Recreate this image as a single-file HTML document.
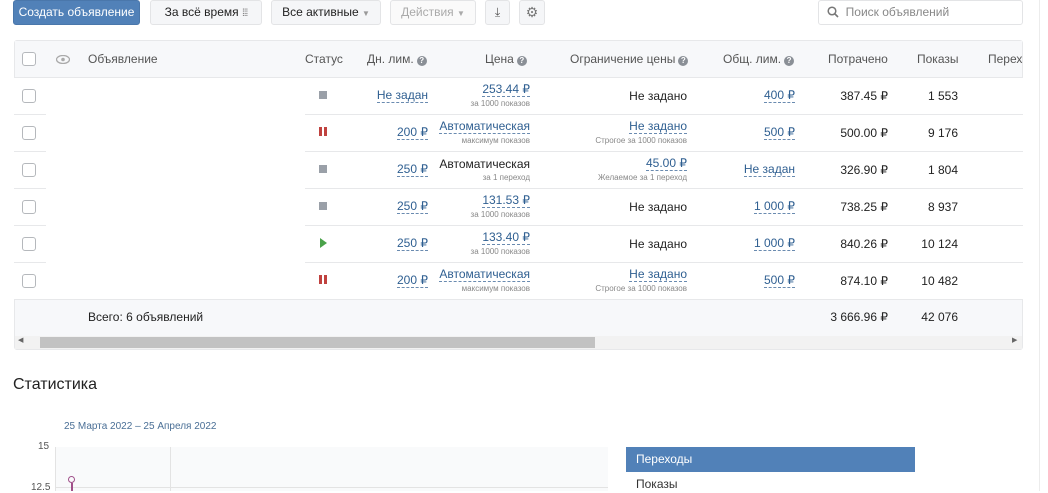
<!DOCTYPE html>
<html><head><meta charset="utf-8"><style>
*{box-sizing:border-box;margin:0;padding:0}
body{width:1048px;height:491px;overflow:hidden;background:#fff;font-family:"Liberation Sans",sans-serif;font-size:12px;color:#222;position:relative}
.a{position:absolute;white-space:nowrap}
.btn{position:absolute;top:0;height:25px;border:1px solid #e3e4e6;border-radius:3px;background:#f5f6f8;line-height:23px;font-size:12px;color:#222;text-align:center}
.r{text-align:right}
.lk{color:#2f5f91;border-bottom:1px dashed #6a8bb0;line-height:13px}
.sub{font-size:8px;color:#888}
.row{position:absolute;left:14px;width:1009px;height:37px;border-top:1px solid #e7e8ea;background:#fff}
.cb{position:absolute;left:8px;top:11px;width:14px;height:14px;border:1px solid #b5b8bc;border-radius:3px;background:#fff}
.hq{display:inline-block;width:10px;height:10px;border-radius:50%;background:#8a8f96;color:#fff;font-size:8px;line-height:10px;text-align:center;font-weight:bold;vertical-align:0px;margin-left:3px}
</style></head><body>
<!-- toolbar -->
<div class="btn" style="left:13px;width:127px;background:#5181b8;border-color:#4a77ab;color:#fff">Создать объявление</div>
<div class="btn" style="left:150px;width:112px">За всё время <span style="color:#777;font-size:10px;letter-spacing:-1px">⁞⁞⁞</span></div>
<div class="btn" style="left:271px;width:110px">Все активные <span style="color:#999;font-size:8px">▼</span></div>
<div class="btn" style="left:390px;width:86px;color:#aaa;background:#fafafa">Действия <span style="font-size:8px">▼</span></div>
<div class="btn" style="left:485px;width:25px;color:#555">⤓</div>
<div class="btn" style="left:519px;width:26px;color:#777;font-size:14px">⚙</div>
<div class="btn" style="left:818px;top:0;width:205px;background:#fff;text-align:left;padding-left:8px;color:#888">
<svg width="12" height="12" viewBox="0 0 12 12" style="vertical-align:-2px"><circle cx="5" cy="5" r="3.8" fill="none" stroke="#777" stroke-width="1.5"/><path d="M8 8l3 3" stroke="#777" stroke-width="1.6"/></svg>&nbsp; Поиск объявлений</div>
<div class="a" style="left:1039px;top:0;width:1px;height:491px;background:#ececec"></div>

<!-- table -->
<div class="a" style="left:14px;top:40px;width:1009px;height:310px;border:1px solid #e7e8ea;border-radius:3px;background:#fafbfc"></div>
<div class="a" style="left:15px;top:41px;width:1007px;height:36px;background:#f7f8fa;color:#555">
  <div class="cb" style="left:7px;top:11px"></div>
  <svg class="a" style="left:41px;top:14px" width="14" height="9" viewBox="0 0 14 9"><ellipse cx="7" cy="4.5" rx="6.5" ry="4" fill="none" stroke="#aaa" stroke-width="1.3"/><circle cx="7" cy="4.5" r="1.8" fill="#aaa"/></svg>
  <span class="a" style="left:73px;top:11px">Объявление</span>
  <span class="a" style="left:290px;top:11px">Статус</span>
  <span class="a" style="left:352px;top:11px">Дн. лим.<span class="hq">?</span></span>
  <span class="a" style="left:470px;top:11px">Цена<span class="hq">?</span></span>
  <span class="a" style="left:555px;top:11px">Ограничение цены<span class="hq">?</span></span>
  <span class="a" style="left:708px;top:11px">Общ. лим.<span class="hq">?</span></span>
  <span class="a" style="left:813px;top:11px">Потрачено</span>
  <span class="a" style="left:902px;top:11px">Показы</span>
  <span class="a" style="left:973px;top:11px">Перех</span>
</div>

<!-- rows -->
<div class="row" style="top:77px"><div class="cb"></div>
<div class="a" style="left:305px;top:13px;width:8px;height:8px;background:#9aa0a8"></div>
<span class="a lk" style="right:595px;top:11px">Не задан</span>
<span class="a lk" style="right:493px;top:5px">253.44 ₽</span><span class="a sub" style="right:493px;top:21px">за 1000 показов</span>
<span class="a" style="right:336px;top:11px">Не задано</span>
<span class="a lk" style="right:228px;top:11px">400 ₽</span>
<span class="a" style="right:135px;top:11px">387.45 ₽</span>
<span class="a" style="right:65px;top:11px">1 553</span></div>

<div class="row" style="top:114px"><div class="cb"></div>
<div class="a" style="left:305px;top:12px;width:3px;height:9px;background:#c0423f"></div><div class="a" style="left:310px;top:12px;width:3px;height:9px;background:#c0423f"></div>
<span class="a lk" style="right:595px;top:11px">200 ₽</span>
<span class="a lk" style="right:493px;top:5px">Автоматическая</span><span class="a sub" style="right:493px;top:21px">максимум показов</span>
<span class="a lk" style="right:336px;top:5px">Не задано</span><span class="a sub" style="right:336px;top:21px">Строгое за 1000 показов</span>
<span class="a lk" style="right:228px;top:11px">500 ₽</span>
<span class="a" style="right:135px;top:11px">500.00 ₽</span>
<span class="a" style="right:65px;top:11px">9 176</span></div>

<div class="row" style="top:151px"><div class="cb"></div>
<div class="a" style="left:305px;top:13px;width:8px;height:8px;background:#9aa0a8"></div>
<span class="a lk" style="right:595px;top:11px">250 ₽</span>
<span class="a" style="right:493px;top:5px">Автоматическая</span><span class="a sub" style="right:493px;top:21px">за 1 переход</span>
<span class="a lk" style="right:336px;top:5px">45.00 ₽</span><span class="a sub" style="right:336px;top:21px">Желаемое за 1 переход</span>
<span class="a lk" style="right:228px;top:11px">Не задан</span>
<span class="a" style="right:135px;top:11px">326.90 ₽</span>
<span class="a" style="right:65px;top:11px">1 804</span></div>

<div class="row" style="top:188px"><div class="cb"></div>
<div class="a" style="left:305px;top:13px;width:8px;height:8px;background:#9aa0a8"></div>
<span class="a lk" style="right:595px;top:11px">250 ₽</span>
<span class="a lk" style="right:493px;top:5px">131.53 ₽</span><span class="a sub" style="right:493px;top:21px">за 1000 показов</span>
<span class="a" style="right:336px;top:11px">Не задано</span>
<span class="a lk" style="right:228px;top:11px">1 000 ₽</span>
<span class="a" style="right:135px;top:11px">738.25 ₽</span>
<span class="a" style="right:65px;top:11px">8 937</span></div>

<div class="row" style="top:225px"><div class="cb"></div>
<div class="a" style="left:306px;top:12px;width:0;height:0;border-left:7px solid #4aa24a;border-top:5px solid transparent;border-bottom:5px solid transparent"></div>
<span class="a lk" style="right:595px;top:11px">250 ₽</span>
<span class="a lk" style="right:493px;top:5px">133.40 ₽</span><span class="a sub" style="right:493px;top:21px">за 1000 показов</span>
<span class="a" style="right:336px;top:11px">Не задано</span>
<span class="a lk" style="right:228px;top:11px">1 000 ₽</span>
<span class="a" style="right:135px;top:11px">840.26 ₽</span>
<span class="a" style="right:65px;top:11px">10 124</span></div>

<div class="row" style="top:262px"><div class="cb"></div>
<div class="a" style="left:305px;top:12px;width:3px;height:9px;background:#c0423f"></div><div class="a" style="left:310px;top:12px;width:3px;height:9px;background:#c0423f"></div>
<span class="a lk" style="right:595px;top:11px">200 ₽</span>
<span class="a lk" style="right:493px;top:5px">Автоматическая</span><span class="a sub" style="right:493px;top:21px">максимум показов</span>
<span class="a lk" style="right:336px;top:5px">Не задано</span><span class="a sub" style="right:336px;top:21px">Строгое за 1000 показов</span>
<span class="a lk" style="right:228px;top:11px">500 ₽</span>
<span class="a" style="right:135px;top:11px">874.10 ₽</span>
<span class="a" style="right:65px;top:11px">10 482</span></div>
<!-- white ad block hiding separators -->
<div class="a" style="left:46px;top:78px;width:259px;height:222px;background:#fff"></div>

<!-- footer -->
<div class="a" style="left:15px;top:299px;width:1007px;height:37px;background:#f7f8fa;border-top:1px solid #e7e8ea"></div>
<span class="a" style="left:88px;top:310px">Всего: 6 объявлений</span>
<span class="a" style="right:160px;top:310px">3 666.96 ₽</span>
<span class="a" style="right:90px;top:310px">42 076</span>
<div class="a" style="left:15px;top:336px;width:1007px;height:13px;background:#f2f2f2"></div>
<div class="a" style="left:40px;top:337px;width:555px;height:11px;background:#c2c2c2"></div>
<span class="a" style="left:18px;top:336px;font-size:7px;color:#666">◀</span>
<span class="a" style="left:1012px;top:336px;font-size:7px;color:#666">▶</span>

<!-- stats -->
<div class="a" style="left:13px;top:376px;font-size:16px;color:#222">Статистика</div>
<div class="a" style="left:64px;top:421px;font-size:10px;color:#4a6f96">25 Марта 2022 – 25 Апреля 2022</div>
<div class="a" style="left:55px;top:447px;width:553px;height:44px;background:#f9fafb"></div>
<div class="a" style="left:55px;top:447px;width:1px;height:44px;background:#e3e3e3"></div>
<div class="a" style="left:170px;top:447px;width:1px;height:44px;background:#e3e3e3"></div>
<div class="a" style="left:55px;top:487px;width:553px;height:1px;background:#e3e3e3"></div>
<span class="a" style="left:38px;top:441px;font-size:10px;color:#555">15</span>
<span class="a" style="left:31px;top:482px;font-size:10px;color:#555">12.5</span>
<div class="a" style="left:68px;top:476px;width:7px;height:7px;border:1.5px solid #a0508a;border-radius:50%"></div>
<div class="a" style="left:71px;top:483px;width:1.5px;height:8px;background:#a0508a"></div>
<div class="a" style="left:626px;top:447px;width:289px;height:25px;background:#5181b8;color:#fff;line-height:25px;padding-left:10px">Переходы</div>
<div class="a" style="left:636px;top:477px;color:#333">Показы</div>
</body></html>
